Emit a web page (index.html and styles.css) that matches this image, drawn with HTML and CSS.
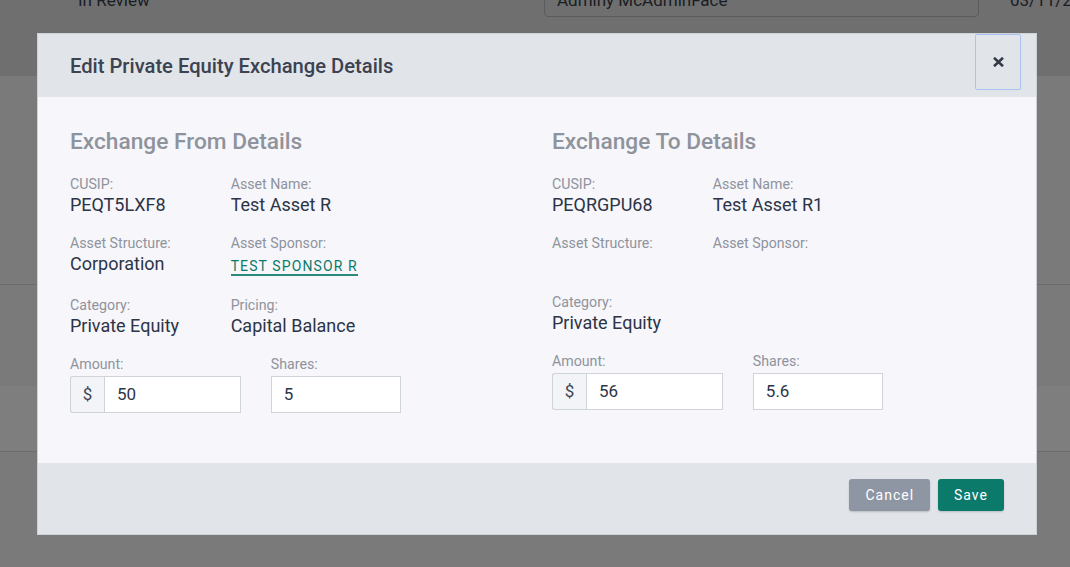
FILE: index.html
```html
<!DOCTYPE html>
<html lang="en">
<head>
<meta charset="utf-8">
<title>Edit Private Equity Exchange Details</title>
<link rel="stylesheet" href="styles.css">
</head>
<body>
<div class="page">
  <div class="band-top">
    <div class="row-top">
      <span class="status">In Review</span>
      <div class="fake-input">Adminy McAdminFace</div>
      <span class="date">03/11/2023</span>
    </div>
  </div>
  <div class="sec sec1"></div>
  <div class="sec sec2"></div>
  <div class="sec sec3"></div>
  <div class="sec sec4"></div>
</div>

<div class="overlay">
  <div class="modal">
    <div class="modal-header">
      <h1 class="modal-title">Edit Private Equity Exchange Details</h1>
      <button class="close-btn" type="button" aria-label="Close">
        <svg width="11" height="10" viewBox="0 0 11 10"><path d="M1 0.8 L10 9.2 M10 0.8 L1 9.2" stroke="#333a45" stroke-width="2.6" fill="none"/></svg>
      </button>
    </div>
    <div class="modal-body">
      <div class="cols">
        <section class="col">
          <h2 class="col-title">Exchange From Details</h2>
          <div class="fields">
            <div class="field"><div class="label">CUSIP:</div><div class="value">PEQT5LXF8</div></div>
            <div class="field"><div class="label">Asset Name:</div><div class="value">Test Asset R</div></div>
            <div class="field"><div class="label">Asset Structure:</div><div class="value">Corporation</div></div>
            <div class="field"><div class="label">Asset Sponsor:</div><div class="value link-value"><a class="sponsor-link" href="#">Test Sponsor R</a></div></div>
            <div class="field"><div class="label">Category:</div><div class="value">Private Equity</div></div>
            <div class="field"><div class="label">Pricing:</div><div class="value">Capital Balance</div></div>
          </div>
          <div class="inputs">
            <div class="input-field">
              <div class="label">Amount:</div>
              <div class="input-group"><span class="addon">$</span><input class="control" type="text" value="50"></div>
            </div>
            <div class="input-field">
              <div class="label">Shares:</div>
              <input class="control shares" type="text" value="5">
            </div>
          </div>
        </section>
        <section class="col">
          <h2 class="col-title">Exchange To Details</h2>
          <div class="fields">
            <div class="field"><div class="label">CUSIP:</div><div class="value">PEQRGPU68</div></div>
            <div class="field"><div class="label">Asset Name:</div><div class="value">Test Asset R1</div></div>
            <div class="field"><div class="label">Asset Structure:</div><div class="value"></div></div>
            <div class="field"><div class="label">Asset Sponsor:</div><div class="value"></div></div>
            <div class="field"><div class="label">Category:</div><div class="value">Private Equity</div></div>
          </div>
          <div class="inputs">
            <div class="input-field">
              <div class="label">Amount:</div>
              <div class="input-group"><span class="addon">$</span><input class="control" type="text" value="56"></div>
            </div>
            <div class="input-field">
              <div class="label">Shares:</div>
              <input class="control shares" type="text" value="5.6">
            </div>
          </div>
        </section>
      </div>
    </div>
    <div class="modal-footer">
      <button class="btn btn-cancel" type="button">Cancel</button>
      <button class="btn btn-save" type="button">Save</button>
    </div>
  </div>
</div>
</body>
</html>
```

FILE: styles.css
```css
* { box-sizing: border-box; }

html, body {
  margin: 0;
  padding: 0;
  width: 1070px;
  height: 567px;
  overflow: hidden;
  font-family: Roboto, "Liberation Sans", Arial, sans-serif;
}

/* ---------- background page ---------- */
.page {
  width: 1070px;
  height: 567px;
  background: #f5f5f5;
}

.band-top {
  height: 76px;
  background: #dfdfdf;
  overflow: hidden;
}

.row-top {
  display: flex;
  align-items: flex-start;
  margin-top: -20px;
  padding-left: 78px;
  font-size: 17px;
  line-height: 20px;
  color: #363c49;
  white-space: nowrap;
}

.status {
  flex: none;
  width: 466px;
  margin-top: 10px;
}

.fake-input {
  flex: none;
  width: 435px;
  height: 37px;
  border: 1px solid #b6b6b6;
  border-radius: 4px;
  padding: 9px 12px 0 12px;
  color: #363c49;
}

.date {
  flex: none;
  margin-left: 31px;
  margin-top: 10px;
}

.sec { background: #f5f5f5; }
.sec1 { height: 209px; border-bottom: 1px solid #d8d8d8; }
.sec2 { height: 101px; }
.sec3 { height: 66px; background: #fdfdfd; border-bottom: 1px solid #d8d8d8; }
.sec4 { height: 115px; }

/* ---------- overlay + modal ---------- */
.overlay {
  position: fixed;
  inset: 0;
  background: rgba(0, 0, 0, 0.5);
  display: flex;
  align-items: flex-start;
  padding: 33px 0 0 37px;
}

.modal {
  width: 1000px;
  border: 1px solid #cdd0d5;
  background: #f6f6fb;
  display: flex;
  flex-direction: column;
}

.modal-header {
  height: 63px;
  background: #e1e4e9;
  display: flex;
  align-items: center;
  justify-content: space-between;
  padding: 0 15px 0 32px;
}

.modal-title {
  margin: 0;
  font-size: 20.2px;
  font-weight: 500;
  color: #3b4250;
  line-height: 24px;
}

.close-btn {
  align-self: flex-start;
  width: 46px;
  height: 56px;
  border: 1px solid #a9c4f2;
  border-radius: 2px;
  background: transparent;
  display: flex;
  align-items: center;
  justify-content: center;
  padding: 0;
}
.close-btn svg { display: block; }

.modal-body {
  height: 366px;
  padding: 31px 32px 0 32px;
  background: #f6f6fb;
}

.cols {
  display: grid;
  grid-template-columns: 452px 452px;
  column-gap: 30px;
}

.col-title {
  margin: 0 0 17px 0;
  font-size: 22.7px;
  font-weight: 500;
  line-height: 28.8px;
  color: #8e939c;
}

.fields {
  display: grid;
  grid-template-columns: 130.67px 130.67px;
  column-gap: 30px;
  row-gap: 17px;
}

.label {
  font-size: 14.2px;
  line-height: 20px;
  color: #8f939b;
}

.value {
  font-size: 18px;
  line-height: 22px;
  min-height: 22px;
  color: #2c3446;
  white-space: nowrap;
}

.link-value {
  display: flex;
  align-items: flex-start;
  height: 25px;
}

.sponsor-link {
  display: inline-block;
  padding-top: 5px;
  font-size: 14px;
  line-height: 16px;
  letter-spacing: 1.1px;
  text-transform: uppercase;
  color: #0b7a6a;
  text-decoration: none;
  border-bottom: 2px solid #2a8b7c;
}

.inputs {
  display: grid;
  grid-template-columns: 170.83px 170.83px;
  column-gap: 30px;
  margin-top: 17px;
}

.input-field .label { margin-bottom: 2px; }

.input-group {
  display: flex;
  width: 171px;
  height: 37px;
}

.addon {
  width: 34px;
  flex: none;
  display: flex;
  align-items: center;
  justify-content: center;
  border: 1px solid #cfd3da;
  border-right: none;
  border-radius: 3px 0 0 3px;
  background: #f3f4f7;
  font-size: 17px;
  color: #3d4452;
}

.control {
  height: 37px;
  border: 1px solid #cfd3da;
  background: #ffffff;
  font-family: Roboto, "Liberation Sans", Arial, sans-serif;
  font-size: 17px;
  color: #2c3446;
  padding: 0 12px;
  margin: 0;
  outline: none;
  border-radius: 0;
}

.input-group .control { flex: 1; min-width: 0; width: 137px; }
.control.shares { width: 130px; display: block; }

.modal-footer {
  height: 71px;
  background: #e1e4e9;
  display: flex;
  align-items: flex-start;
  justify-content: flex-end;
  gap: 8px;
  padding: 16px 32px 0 32px;
}

.btn {
  height: 32px;
  padding: 0 16px;
  border: none;
  border-radius: 3px;
  font-family: Roboto, "Liberation Sans", Arial, sans-serif;
  font-size: 14px;
  letter-spacing: 1px;
  color: #ffffff;
  box-shadow: 0 1px 2px rgba(0, 0, 0, 0.18);
}

.btn-cancel { background: #8e95a3; }
.btn-save { background: #0b7a6b; }
```
